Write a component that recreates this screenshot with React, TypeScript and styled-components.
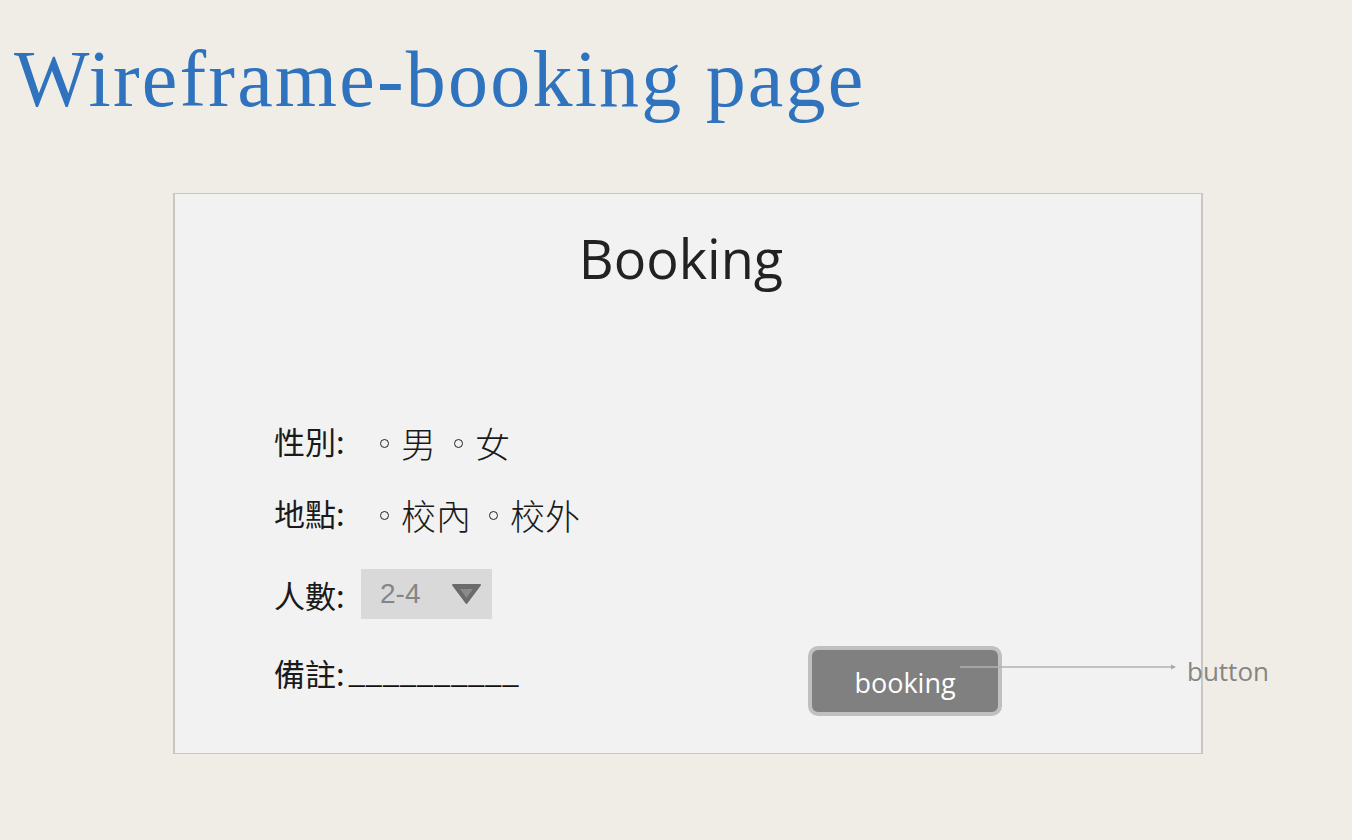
import React from "react";
import styled, { createGlobalStyle } from "styled-components";

const Global = createGlobalStyle`
  html, body { margin: 0; padding: 0; background: #f0ede6; }
  body { width: 1352px; height: 840px; overflow: hidden; }
`;

const Page = styled.div`
  width: 1352px;
  height: 840px;
  position: relative;
  display: flex;
  flex-direction: column;
`;

const Title = styled.h1`
  margin: 0;
  padding: 33px 0 0 14px;
  height: 193px;
  box-sizing: border-box;
  font-family: "Liberation Serif", serif;
  font-weight: normal;
  font-size: 80px;
  line-height: 92px;
  color: #2f72bd;
  letter-spacing: 2.2px;
  white-space: nowrap;
`;

const Panel = styled.div`
  margin-left: 173px;
  width: 1030px;
  height: 561px;
  box-sizing: border-box;
  background: #f2f2f2;
  border: 1px solid #c9c7c1;
  border-left-width: 2px;
  border-right-width: 2px;
  position: relative;
  display: flex;
  flex-direction: column;
`;

const Heading = styled.div`
  font-family: "Open Sans", sans-serif;
  font-size: 54px;
  line-height: 70px;
  color: #222;
  text-align: center;
  margin-top: 29px;
  margin-right: 14px;
`;

const Form = styled.div`
  display: flex;
  flex-direction: column;
  padding-left: 99px;
  margin-top: 112px;
`;

const Row = styled.div<{ $h: number }>`
  display: flex;
  align-items: center;
  height: ${(p) => p.$h}px;
  font-family: "Noto Sans CJK TC", sans-serif;
  font-size: 31px;
  color: #1a1a1a;
`;

const Label = styled.span`
  width: 106px;
  flex: none;
`;

const Option = styled.span`
  display: inline-flex;
  align-items: center;
  margin-right: 18px;
  font-size: 35px;
  font-weight: 300;
  margin-top: 4px;
`;

const Dot = styled.span`
  display: inline-block;
  width: 7px;
  height: 7px;
  border: 1.4px solid #222;
  border-radius: 50%;
  margin-right: 12px;
  margin-top: 2px;
`;

const Select = styled.div`
  width: 131px;
  height: 50px;
  background: #d9d9d9;
  display: flex;
  align-items: center;
  justify-content: space-between;
  box-sizing: border-box;
  padding: 0 10px 0 19px;
  margin-left: -19px;
  font-family: "Liberation Sans", sans-serif;
  font-size: 28px;
  color: #858585;
`;

const Blank = styled.span`
  font-family: "Liberation Sans", sans-serif;
  font-size: 28px;
  letter-spacing: 1.5px;
  margin-left: -31px;
  color: #111;
`;

const Button = styled.div`
  position: absolute;
  left: 633px;
  top: 452px;
  width: 194px;
  height: 70px;
  box-sizing: border-box;
  border: 4px solid #c0c0c0;
  border-radius: 10px;
  background: #808080;
  display: flex;
  align-items: center;
  justify-content: center;
  font-family: "Open Sans", sans-serif;
  font-size: 27px;
  color: #fff;
  padding-top: 2px;
`;

const Annotation = styled.div`
  position: absolute;
  left: 960px;
  top: 652px;
  display: flex;
  align-items: flex-start;
  font-family: "Open Sans", sans-serif;
  font-size: 26px;
  line-height: 38px;
  color: #858585;
`;

const Arrow = styled.svg`
  margin-top: 10px;
  flex: none;
`;

const AnnotationText = styled.span`
  margin-left: 9px;
`;

export default function App() {
  return (
    <>
      <Global />
      <Page>
        <Title>Wireframe-booking page</Title>
        <Panel>
          <Heading>Booking</Heading>
          <Form>
            <Row $h={70}>
              <Label>性別:</Label>
              <Option><Dot />男</Option>
              <Option><Dot />女</Option>
            </Row>
            <Row $h={74}>
              <Label>地點:</Label>
              <Option><Dot />校內</Option>
              <Option><Dot />校外</Option>
            </Row>
            <Row $h={90}>
              <Label>人數:</Label>
              <Select>
                <span>2-4</span>
                <svg width="31" height="22" viewBox="0 0 31 22">
                  <polygon points="2,2 29,2 15.5,20" fill="#6b6b6b" stroke="#6b6b6b" strokeWidth="2" strokeLinejoin="round" />
                  <polygon points="9,6 22,6 15.5,15" fill="#8a8a8a" />
                </svg>
              </Select>
            </Row>
            <Row $h={66}>
              <Label>備註:</Label>
              <Blank>__________</Blank>
            </Row>
          </Form>
          <Button>booking</Button>
        </Panel>
        <Annotation>
          <Arrow width="218" height="10" viewBox="0 0 218 10">
            <line x1="0" y1="5" x2="212" y2="5" stroke="#b3b3ab" strokeWidth="1.5" />
            <polygon points="211,2.5 216,5 211,7.5" fill="#a8a8a8" />
          </Arrow>
          <AnnotationText>button</AnnotationText>
        </Annotation>
      </Page>
    </>
  );
}
